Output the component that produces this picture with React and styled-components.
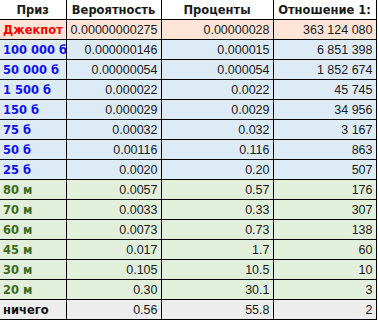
import styled, { createGlobalStyle } from 'styled-components'

const GlobalStyle = createGlobalStyle`
  html, body {
    margin: 0;
    padding: 0;
    background: #ffffff;
  }
`

const Sheet = styled.table`
  border-collapse: collapse;
  table-layout: fixed;
  width: 376px;
  font-family: "Liberation Sans", Arial, sans-serif;
  font-size: 12.5px;
  color: #1a1a1a;
`

const HeadCell = styled.th`
  height: 19px;
  padding: 0;
  font-family: "DejaVu Sans", Verdana, sans-serif;
  font-weight: bold;
  font-size: 11.5px;
  text-align: center;
  border-right: 1px solid #000;
  border-bottom: 1px solid #000;
  background: #ffffff;
  &:last-child { border-right: 1px solid #000; }
`

const Row = styled.tr`
  background: ${p => p.$bg};
`

const Label = styled.td`
  height: 19px;
  padding: 0 0 0 3px;
  font-family: "DejaVu Sans", Verdana, sans-serif;
  font-weight: bold;
  font-size: 11.5px;
  color: ${p => p.$color};
  border-right: 1px solid #000;
  border-bottom: 1px solid #000;
  white-space: nowrap;
`

const Num = styled.td`
  height: 19px;
  padding: 0 3px 0 0;
  text-align: right;
  border-right: 1px solid #000;
  border-bottom: 1px solid #000;
  white-space: nowrap;
`

const groups = {
  jackpot: { bg: '#fce4d6', color: '#ff0000' },
  money: { bg: '#ddebf7', color: '#1010f0' },
  minutes: { bg: '#e2efda', color: '#3a6b1c' },
  none: { bg: '#ededed', color: '#111111' },
}

const rows = [
  ['Джекпот', '0.00000000275', '0.00000028', '363 124 080', 'jackpot'],
  ['100 000 б', '0.000000146', '0.000015', '6 851 398', 'money'],
  ['50 000 б', '0.00000054', '0.000054', '1 852 674', 'money'],
  ['1 500 б', '0.000022', '0.0022', '45 745', 'money'],
  ['150 б', '0.000029', '0.0029', '34 956', 'money'],
  ['75 б', '0.00032', '0.032', '3 167', 'money'],
  ['50 б', '0.00116', '0.116', '863', 'money'],
  ['25 б', '0.0020', '0.20', '507', 'money'],
  ['80 м', '0.0057', '0.57', '176', 'minutes'],
  ['70 м', '0.0033', '0.33', '307', 'minutes'],
  ['60 м', '0.0073', '0.73', '138', 'minutes'],
  ['45 м', '0.017', '1.7', '60', 'minutes'],
  ['30 м', '0.105', '10.5', '10', 'minutes'],
  ['20 м', '0.30', '30.1', '3', 'minutes'],
  ['ничего', '0.56', '55.8', '2', 'none'],
]

export default function App() {
  return (
    <>
      <GlobalStyle />
      <Sheet>
        <colgroup>
          <col style={{ width: 66 }} />
          <col style={{ width: 95 }} />
          <col style={{ width: 112 }} />
          <col style={{ width: 103 }} />
        </colgroup>
        <thead>
          <tr>
            <HeadCell>Приз</HeadCell>
            <HeadCell>Вероятность</HeadCell>
            <HeadCell>Проценты</HeadCell>
            <HeadCell>Отношение 1:</HeadCell>
          </tr>
        </thead>
        <tbody>
          {rows.map(([prize, prob, pct, ratio, kind]) => (
            <Row key={prize} $bg={groups[kind].bg}>
              <Label $color={groups[kind].color}>{prize}</Label>
              <Num>{prob}</Num>
              <Num>{pct}</Num>
              <Num>{ratio}</Num>
            </Row>
          ))}
        </tbody>
      </Sheet>
    </>
  )
}
